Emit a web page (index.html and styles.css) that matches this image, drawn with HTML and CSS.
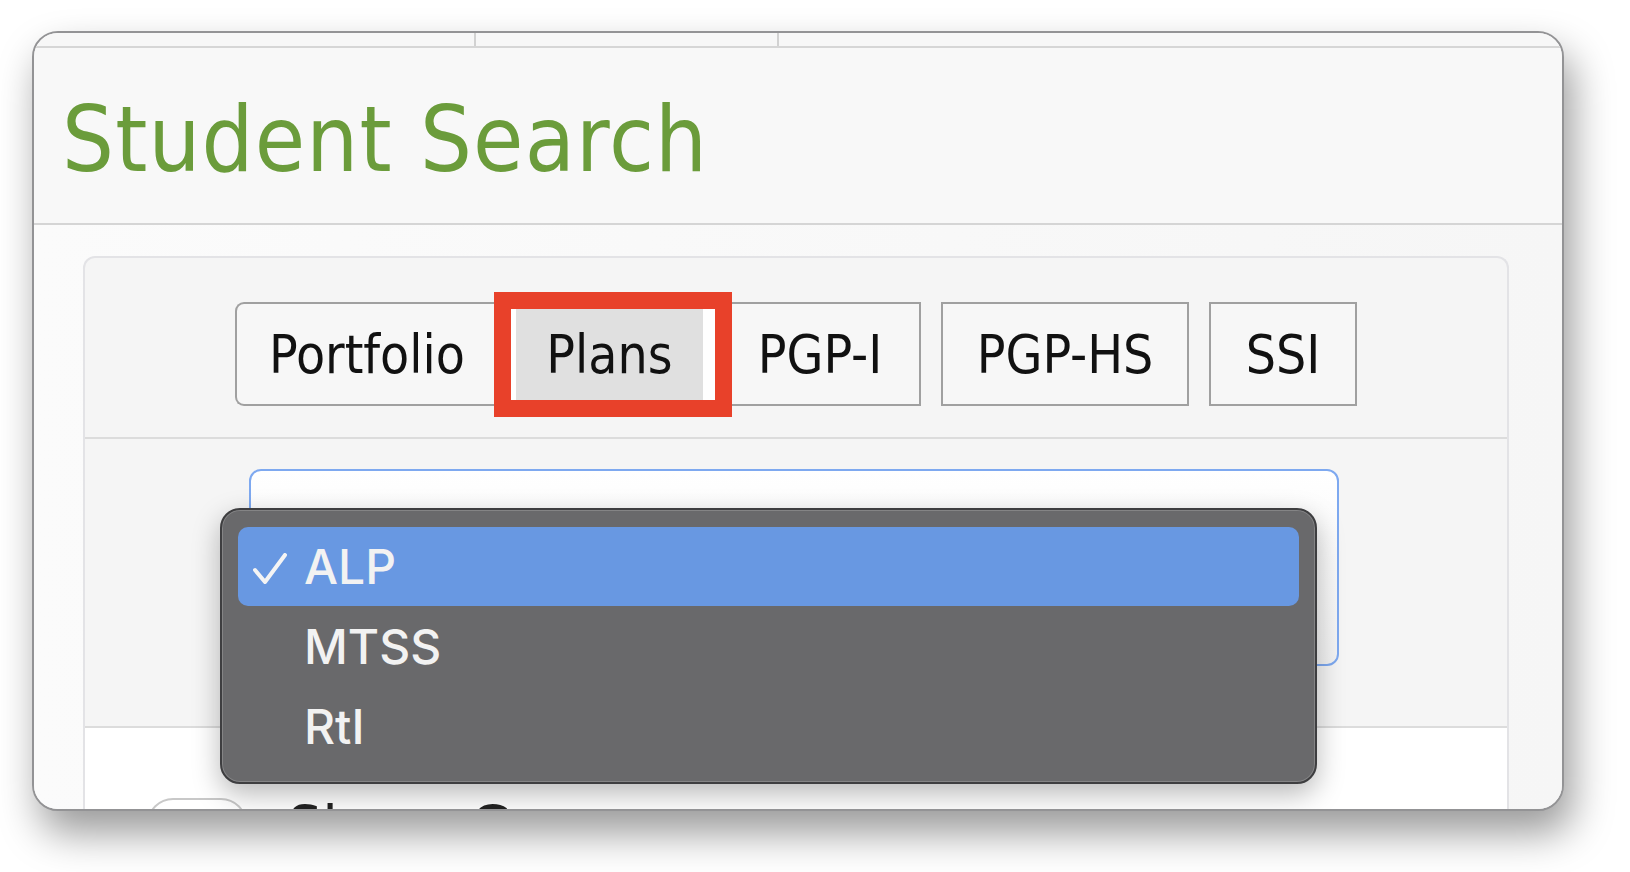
FILE: index.html
```html
<!DOCTYPE html>
<html lang="en">
<head>
    <meta charset="UTF-8">
    <title>Student Search</title>
    <link rel="stylesheet" href="styles.css">
</head>
<body>
    <div class="window">
        <div class="topnav">
            <span class="navCell navFirst"></span>
            <span class="navCell navSecond"></span>
            <span class="navCell"></span>
        </div>
        <div class="pageHeader">
            <h1 class="pageTitle">Student Search</h1>
        </div>
        <div class="content">
            <div class="panel">
                <div class="panelHead">
                    <div class="tabGroup">
                        <a href="#" class="tab tabFirst">Portfolio</a>
                        <a href="#" class="tab tabActive">Plans</a>
                        <a href="#" class="tab tabLast">PGP-I</a>
                    </div>
                    <a href="#" class="tab tabHs">PGP-HS</a>
                    <a href="#" class="tab tabSsi">SSI</a>
                </div>
                <div class="panelBody">
                    <div class="selectBox"></div>
                </div>
                <div class="panelFoot">
                    <span class="pill"></span>
                    <span class="footLabel">Show Groups</span>
                </div>
            </div>
        </div>

        <!-- red highlight drawn over the active tab -->
        <div class="markBox"></div>

        <!-- open select menu -->
        <ul class="popup">
            <li class="option selected">
                <svg class="check" width="34" height="32" viewBox="0 0 34 32">
                    <path d="M2 17 L12 29 L32 2" fill="none" stroke="#f4f4f4" stroke-width="4" stroke-linecap="round" stroke-linejoin="round"/>
                </svg>
                <span>ALP</span>
            </li>
            <li class="option"><span>MTSS</span></li>
            <li class="option"><span>RtI</span></li>
        </ul>
    </div>
</body>
</html>
```

FILE: styles.css
```css
*{
    box-sizing: border-box;
}
html, body{
    height: 100%;
}
body{
    margin: 0;
    background: #fff;
    font-family: "DejaVu Sans Condensed", "DejaVu Sans", sans-serif;
}
.window{
    position: relative;
    margin: 31px 0 0 32px;
    width: 1532px;
    height: 780px;
    border: 2px solid #939395;
    border-radius: 26px;
    overflow: hidden;
    background: #f8f8f8;
    box-shadow: 8px 22px 40px rgba(0, 0, 0, 0.4);
}
.topnav{
    display: flex;
    height: 15px;
    border-bottom: 2px solid #d6d6d6;
    background: #f7f7f7;
}
.navCell{
    display: block;
    height: 100%;
}
.navFirst{
    width: 442px;
    border-right: 2px solid #d2d2d2;
}
.navSecond{
    width: 303px;
    border-right: 2px solid #d2d2d2;
}
.pageHeader{
    height: 177px;
    padding: 46px 0 0 28px;
    background: #f8f8f8;
    border-bottom: 2px solid #d5d5d5;
}
.pageTitle{
    margin: 0;
    font-size: 91px;
    line-height: 1;
    font-weight: normal;
    color: #6b9c3b;
    letter-spacing: 1.2px;
}
.content{
    padding: 31px 53px 0 49px;
    background: linear-gradient(to right, #fbfbfb, #f6f6f6);
    height: 600px;
}
.panel{
    background: #f5f5f5;
    border: 2px solid #e3e3e6;
    border-bottom: none;
    border-radius: 12px 12px 0 0;
    height: 100%;
}
.panelHead{
    display: flex;
    justify-content: center;
    gap: 20px;
    padding: 44px 0 31px;
    border-bottom: 2px solid #dcdcdc;
}
.tabGroup{
    display: flex;
}
.tab{
    display: flex;
    align-items: center;
    justify-content: center;
    height: 104px;
    padding: 0;
    font-size: 53px;
    color: #111;
    text-decoration: none;
    background: #f7f7f7;
    border: 2px solid #a0a0a0;
}
.tabFirst{
    width: 262px;
    border-radius: 9px 0 0 9px;
    border-right: none;
}
.tabActive{
    width: 224px;
    background: #e0e0e0;
    border-left: 19px solid #fff;
    border-right: 18px solid #fff;
}
.tabLast{
    width: 200px;
    border-left: none;
}
.tabHs{
    width: 248px;
}
.tabSsi{
    width: 148px;
}
.panelBody{
    height: 289px;
    padding: 30px 0 0 164px;
    border-bottom: 2px solid #dcdcdc;
}
.selectBox{
    width: 1090px;
    height: 197px;
    border: 2px solid #7ea9f0;
    border-radius: 12px;
    background: linear-gradient(#fff, #f3f3f3);
}
.panelFoot{
    display: flex;
    align-items: flex-start;
    gap: 40px;
    padding: 70px 0 0 62px;
    background: #fff;
    height: 200px;
}
.pill{
    display: block;
    width: 100px;
    height: 52px;
    border: 2px solid #c8c8c8;
    border-radius: 26px;
}
.footLabel{
    margin-top: 0;
    font-size: 62px;
    line-height: 1;
    color: #222;
    word-spacing: 14px;
}
.markBox{
    position: absolute;
    left: 460px;
    top: 259px;
    width: 238px;
    height: 125px;
    border: 17px solid #e8412a;
}
.popup{
    position: absolute;
    left: 186px;
    top: 475px;
    width: 1097px;
    height: 276px;
    margin: 0;
    padding: 17px 16px;
    list-style: none;
    background: #69696b;
    border: 2px solid #3e3e40;
    border-radius: 20px;
    box-shadow: inset 0 0 0 1px rgba(255, 255, 255, 0.18), 0 10px 28px rgba(0, 0, 0, 0.28);
    font-family: Inter, "Noto Sans", sans-serif;
    font-weight: 500;
    font-size: 48px;
    color: #f2f2f2;
}
.option{
    position: relative;
    display: flex;
    align-items: center;
    height: 80px;
    padding-left: 66px;
    border-radius: 10px;
}
.selected{
    height: 79px;
    background: #6898e2;
}
.check{
    position: absolute;
    left: 15px;
    top: 26px;
}
```
